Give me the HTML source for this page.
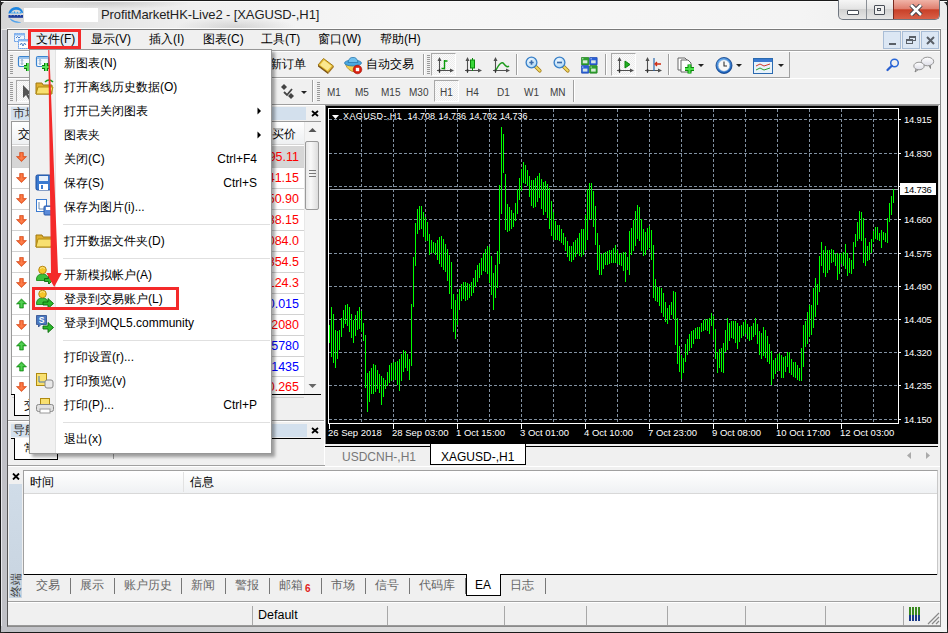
<!DOCTYPE html>
<html><head><meta charset="utf-8">
<style>
*{box-sizing:border-box;margin:0;padding:0}
html,body{width:948px;height:633px;overflow:hidden;background:#2a2a2a;font-family:"Liberation Sans",sans-serif;font-size:12px;color:#000}
.a{position:absolute}
.t{position:absolute;white-space:nowrap;line-height:14px}
.cn{font-size:12px}
.tb{font-size:11px;color:#333}
</style></head><body>
<div class="a" style="left:0;top:0;width:948px;height:633px;border:1px solid #1a1a1a;border-radius:8px 8px 7px 7px;background:linear-gradient(#f0f0f0,#e9e9e9 30px,#e3e3e3)"></div>
<div class="a" style="left:1px;top:30px;width:6px;height:600px;background:#c0c1c6;border-left:1px solid #e8e8ec"></div>
<div class="a" style="left:941px;top:30px;width:6px;height:600px;background:#f4f4f4"></div>
<div class="a" style="left:1px;top:626px;width:946px;height:6px;background:linear-gradient(90deg,#c0c1c6,#e0e0e0 50%,#f4f4f4)"></div>
<div class="a" style="left:1px;top:1px;width:946px;height:28px;border-radius:7px 7px 0 0;background:radial-gradient(60px 10px at 235px 26px,rgba(160,160,160,.35),transparent),radial-gradient(80px 6px at 110px 2px,rgba(150,150,150,.3),transparent),linear-gradient(90deg,#d6d6d6,#e4e4e4 80px,#f0f0f0 200px,#f6f6f6 400px,#f4f4f4 800px,#ececec)"></div>
<div class="a" style="left:1px;top:1px;width:946px;height:1px;background:#fafafa"></div>
<svg class="a" style="left:7px;top:6px" width="18" height="18" viewBox="0 0 18 18">
<path d="M1.3 7.6Q3 1 9 1Q14.5 1 16.2 6.5L15 7.2Q13 3.5 9 3.8Q5 4 3.5 7.6z" fill="#1e86e0"/>
<path d="M4 7.5L5 5.5L6 7.5L7.5 5L9 7.5L10.5 5.5L12 7.5L13.5 5.5L15 7.2" fill="#3aa0ee"/>
<rect x="1.5" y="9" width="14.5" height="2.8" fill="#1c3c9c"/>
<path d="M3.5 9.6h1M6.8 9.6h1M10 9.6h1M13 9.6h1" stroke="#9ab0e0" stroke-width=".8"/>
<path d="M3 12.8Q6 17.3 13.5 16.5Q8 16.2 3 12.8z" fill="#2a8ae0" stroke="#5aaaf0" stroke-width=".6"/>
</svg>
<div class="a" style="left:24px;top:8px;width:74px;height:14px;background:#fff"></div>
<div class="t" style="left:101px;top:6px;font-size:13px;line-height:17px;color:#1e1e1e;letter-spacing:-0.1px">ProfitMarketHK-Live2 - [XAGUSD-,H1]</div>
<!-- caption buttons -->
<div class="a" style="left:838px;top:0;width:102px;height:20px;border:1px solid #6f7680;border-top:none;border-radius:0 0 5px 5px;overflow:hidden;background:linear-gradient(#f6f6f6,#e4e4e4 45%,#d2d2d2 50%,#e6e6e6)">
 <div class="a" style="left:27px;top:0;width:1px;height:20px;background:#8a8f96"></div>
 <div class="a" style="left:54px;top:-1px;width:48px;height:21px;border:1px solid #7a2a20;border-radius:0 0 5px 0;background:linear-gradient(#f0b4a8,#e08070 45%,#c84028 52%,#d86048)"></div>
 <div class="a" style="left:8px;top:10px;width:12px;height:5px;border:1.5px solid #4a4f58;border-radius:1px;background:#fff"></div>
 <div class="a" style="left:35px;top:5px;width:11px;height:10px;border:1.5px solid #4a4f58;border-radius:1px;background:#f0f0f0"><div class="a" style="left:2px;top:2px;width:4px;height:3px;border:1px solid #4a4f58"></div></div>
 <svg class="a" style="left:70px;top:4px" width="14" height="12" viewBox="0 0 14 12"><path d="M2 1L12 11M12 1L2 11" stroke="#3b3f47" stroke-width="4.5"/><path d="M2 1L12 11M12 1L2 11" stroke="#fff" stroke-width="2.5"/></svg>
</div>
<div class="a" style="left:7px;top:28px;width:934px;height:1px;background:#fdfdfd"></div>
<div class="a" style="left:7px;top:29px;width:934px;height:598px;background:#f0f0f0;border-top:1px solid #7a7a7a;border-left:1px solid #555;border-right:1px solid #8a8a8a;border-bottom:1px solid #8a8a8a"></div>
<svg class="a" style="left:13px;top:32px" width="16" height="17" viewBox="0 0 16 17">
<rect x="1.5" y="1.5" width="10" height="8" fill="#eef5fd" stroke="#3a80e0" stroke-dasharray="1.2 .8"/>
<rect x="1.5" y="1.5" width="10" height="2" fill="#8ab8f0"/>
<rect x="5.5" y="7.5" width="10" height="9" fill="#fff" stroke="#3a80e0" stroke-dasharray="1.2 .8"/>
<rect x="5.5" y="7.5" width="10" height="2" fill="#8ab8f0"/>
<path d="M3 6l1.5-1.5 1.5 1.5 1.5-1.5M7 13l1.5-2 1.5 3 1.5-3 1.5 2" stroke="#3a70c0" fill="none" stroke-width=".9"/>
</svg>
<div class="a" style="left:31px;top:32px;width:47px;height:14px;background:#e6edf4"></div>
<div class="t cn" style="left:36px;top:31px;line-height:16px">文件(F)</div>
<div class="t cn" style="left:91px;top:31px;line-height:16px">显示(V)</div>
<div class="t cn" style="left:149px;top:31px;line-height:16px">插入(I)</div>
<div class="t cn" style="left:203px;top:31px;line-height:16px">图表(C)</div>
<div class="t cn" style="left:261px;top:31px;line-height:16px">工具(T)</div>
<div class="t cn" style="left:318px;top:31px;line-height:16px">窗口(W)</div>
<div class="t cn" style="left:380px;top:31px;line-height:16px">帮助(H)</div>
<!-- mdi buttons -->
<div class="a" style="left:883px;top:31px;width:18px;height:18px;background:#dce7f4;border:1px solid #a9bdd6"><div class="a" style="left:5px;top:11px;width:7px;height:2px;background:#5a6068"></div></div>
<div class="a" style="left:902px;top:31px;width:18px;height:18px;background:#dce7f4;border:1px solid #a9bdd6"><div class="a" style="left:6px;top:4px;width:7px;height:5px;border:1px solid #5a6068;border-top-width:2px"></div><div class="a" style="left:3px;top:7px;width:7px;height:5px;border:1px solid #5a6068;border-top-width:2px;background:#dce7f4"></div></div>
<div class="a" style="left:921px;top:31px;width:18px;height:18px;background:#dce7f4;border:1px solid #a9bdd6"><svg class="a" style="left:4px;top:4px" width="9" height="9"><path d="M1 1L8 8M8 1L1 8" stroke="#5a6068" stroke-width="2"/></svg></div>
<div class="a" style="left:8px;top:50px;width:932px;height:1px;background:#a0a0a0"></div><div class="a" style="left:8px;top:51px;width:932px;height:1px;background:#fff"></div><div class="a" style="left:8px;top:77px;width:781px;height:1px;background:#a0a0a0"></div><div class="a" style="left:8px;top:78px;width:932px;height:1px;background:#fff"></div><div class="a" style="left:789px;top:52px;width:1px;height:26px;background:#a0a0a0"></div><div class="a" style="left:8px;top:104px;width:932px;height:1px;background:#a0a0a0"></div><div class="a" style="left:8px;top:105px;width:932px;height:1px;background:#fff"></div><div class="a" style="left:10px;top:55px;width:3px;height:1px;background:#9a9a9a"></div><div class="a" style="left:10px;top:57px;width:3px;height:1px;background:#9a9a9a"></div><div class="a" style="left:10px;top:59px;width:3px;height:1px;background:#9a9a9a"></div><div class="a" style="left:10px;top:61px;width:3px;height:1px;background:#9a9a9a"></div><div class="a" style="left:10px;top:63px;width:3px;height:1px;background:#9a9a9a"></div><div class="a" style="left:10px;top:65px;width:3px;height:1px;background:#9a9a9a"></div><div class="a" style="left:10px;top:67px;width:3px;height:1px;background:#9a9a9a"></div><div class="a" style="left:10px;top:69px;width:3px;height:1px;background:#9a9a9a"></div><div class="a" style="left:10px;top:71px;width:3px;height:1px;background:#9a9a9a"></div><div class="a" style="left:10px;top:73px;width:3px;height:1px;background:#9a9a9a"></div><div class="a" style="left:10px;top:82px;width:3px;height:1px;background:#9a9a9a"></div><div class="a" style="left:10px;top:84px;width:3px;height:1px;background:#9a9a9a"></div><div class="a" style="left:10px;top:86px;width:3px;height:1px;background:#9a9a9a"></div><div class="a" style="left:10px;top:88px;width:3px;height:1px;background:#9a9a9a"></div><div class="a" style="left:10px;top:90px;width:3px;height:1px;background:#9a9a9a"></div><div class="a" style="left:10px;top:92px;width:3px;height:1px;background:#9a9a9a"></div><div class="a" style="left:10px;top:94px;width:3px;height:1px;background:#9a9a9a"></div><div class="a" style="left:10px;top:96px;width:3px;height:1px;background:#9a9a9a"></div><div class="a" style="left:10px;top:98px;width:3px;height:1px;background:#9a9a9a"></div><div class="a" style="left:10px;top:100px;width:3px;height:1px;background:#9a9a9a"></div><svg class="a" style="left:17px;top:53px" width="20" height="20" viewBox="0 0 20 20"><rect x="1.5" y="3.5" width="12" height="10" rx="1.5" fill="#f4f8fd" stroke="#3a84d0" stroke-width="1.2"/><rect x="2" y="4" width="11" height="2" fill="#9cc4ec"/><path d="M5 6.5v5M4 7.5l1-1 1 1M4 10.5l1 1 1-1" stroke="#6a8ab0" stroke-width=".8" fill="none"/><path d="M7 14h8M11 10v8" stroke="#0a7a0a" stroke-width="4"/><path d="M7 14h8M11 10v8" stroke="#5ae05a" stroke-width="2"/></svg><div class="a" style="left:16px;top:80px;width:22px;height:22px;border:1px solid #a8a8a8;border-right-color:#fff;border-bottom-color:#fff;background:repeating-conic-gradient(#fbfbfb 0 25%,#ececec 0 50%) 0 0/2px 2px"></div><svg class="a" style="left:21px;top:84px" width="14" height="16" viewBox="0 0 14 16"><path d="M2 1v13l3-3 3 5 2-1-3-5h4z" fill="#555"/></svg><div class="t cn" style="left:270px;top:56px;line-height:16px">新订单</div><svg class="a" style="left:317px;top:57px" width="18" height="18" viewBox="0 0 18 18"><path d="M1 8L6.5 1.5L16.5 9L11 15.5z" fill="#e8c038" stroke="#9a7010" stroke-width=".9"/><path d="M3 8L7 3.3L14.5 9L10.5 13.6z" fill="#fbe890"/><path d="M1 8L11 15.5L11 17L1 9.6z" fill="#7a5010"/><path d="M11 15.5L16.5 9L16.5 10.5L11 17z" fill="#a87828"/></svg><svg class="a" style="left:343px;top:56px" width="20" height="19" viewBox="0 0 20 19"><path d="M2.5 8.5Q5 15 12 16L15 10z" fill="#f2d050" stroke="#b08820" stroke-width=".8"/><ellipse cx="10" cy="7" rx="8.5" ry="3" fill="#4aa8e0" stroke="#2a78b0" stroke-width=".8"/><path d="M5 6.5Q6 1 10 1.5Q14 1 15 6.5z" fill="#70c0ee" stroke="#2a78b0" stroke-width=".8"/><circle cx="14.5" cy="13.5" r="4.3" fill="#d82010" stroke="#a01008" stroke-width=".6"/><rect x="12.8" y="11.8" width="3.4" height="3.4" fill="#fff"/></svg><div class="t cn" style="left:366px;top:56px;line-height:16px">自动交易</div><div class="a" style="left:423px;top:54px;width:1px;height:21px;background:#a0a0a0;box-shadow:1px 0 0 #fff"></div><div class="a" style="left:427px;top:55px;width:3px;height:1px;background:#9a9a9a"></div><div class="a" style="left:427px;top:57px;width:3px;height:1px;background:#9a9a9a"></div><div class="a" style="left:427px;top:59px;width:3px;height:1px;background:#9a9a9a"></div><div class="a" style="left:427px;top:61px;width:3px;height:1px;background:#9a9a9a"></div><div class="a" style="left:427px;top:63px;width:3px;height:1px;background:#9a9a9a"></div><div class="a" style="left:427px;top:65px;width:3px;height:1px;background:#9a9a9a"></div><div class="a" style="left:427px;top:67px;width:3px;height:1px;background:#9a9a9a"></div><div class="a" style="left:427px;top:69px;width:3px;height:1px;background:#9a9a9a"></div><div class="a" style="left:427px;top:71px;width:3px;height:1px;background:#9a9a9a"></div><div class="a" style="left:427px;top:73px;width:3px;height:1px;background:#9a9a9a"></div><div class="a" style="left:431px;top:53px;width:25px;height:23px;border:1px solid #a8a8a8;border-right-color:#fff;border-bottom-color:#fff;background:repeating-conic-gradient(#fbfbfb 0 25%,#ececec 0 50%) 0 0/2px 2px"></div><svg class="a" style="left:436px;top:56px" width="20" height="19"><path d="M3.5 3v14M1 14.5h14" stroke="#505050" stroke-width="1.1" fill="none"/><path d="M1.5 5L3.5 1L5.5 5z" fill="#505050"/><path d="M14 12.5L18 14.5L14 16.5z" fill="#505050"/><path d="M3.5 13v3" stroke="#303030" stroke-width="1.5"/><path d="M8.5 4v9.5M8.5 5h3M5.5 12.5h3" stroke="#0a9a0a" stroke-width="1.4" fill="none"/></svg><svg class="a" style="left:464px;top:56px" width="20" height="19"><path d="M3.5 3v14M1 14.5h14" stroke="#505050" stroke-width="1.1" fill="none"/><path d="M1.5 5L3.5 1L5.5 5z" fill="#505050"/><path d="M14 12.5L18 14.5L14 16.5z" fill="#505050"/><path d="M3.5 13v3" stroke="#303030" stroke-width="1.5"/><path d="M8.5 2v13" stroke="#0a8a0a"/><rect x="6.5" y="4" width="4" height="8" fill="#3ad83a" stroke="#0a8a0a"/></svg><svg class="a" style="left:492px;top:56px" width="20" height="19"><path d="M3.5 3v14M1 14.5h14" stroke="#505050" stroke-width="1.1" fill="none"/><path d="M1.5 5L3.5 1L5.5 5z" fill="#505050"/><path d="M14 12.5L18 14.5L14 16.5z" fill="#505050"/><path d="M3.5 13v3" stroke="#303030" stroke-width="1.5"/><path d="M4 14q5-10 8-6t5 2" stroke="#1a9a1a" stroke-width="1.4" fill="none"/></svg><div class="a" style="left:516px;top:54px;width:1px;height:21px;background:#a0a0a0;box-shadow:1px 0 0 #fff"></div><svg class="a" style="left:523px;top:55px" width="21" height="20" viewBox="0 0 21 20"><defs><radialGradient id="lg523" cx=".4" cy=".35" r=".7"><stop offset="0" stop-color="#f4faff"/><stop offset="1" stop-color="#a8d4f4"/></radialGradient></defs><path d="M12.3 11.3L16.8 15.8" stroke="#a07818" stroke-width="3.6" stroke-linecap="round"/><path d="M12.3 11.3L16.8 15.8" stroke="#f0d860" stroke-width="2" stroke-linecap="round"/><circle cx="8.5" cy="7.5" r="5.4" fill="url(#lg523)" stroke="#3a80c8" stroke-width="1.3"/><path d="M6.3 7.5h4.4M8.5 5.3v4.4" stroke="#3a6aa8" stroke-width="1.7"/></svg><svg class="a" style="left:551px;top:55px" width="21" height="20" viewBox="0 0 21 20"><defs><radialGradient id="lg551" cx=".4" cy=".35" r=".7"><stop offset="0" stop-color="#f4faff"/><stop offset="1" stop-color="#a8d4f4"/></radialGradient></defs><path d="M12.3 11.3L16.8 15.8" stroke="#a07818" stroke-width="3.6" stroke-linecap="round"/><path d="M12.3 11.3L16.8 15.8" stroke="#f0d860" stroke-width="2" stroke-linecap="round"/><circle cx="8.5" cy="7.5" r="5.4" fill="url(#lg551)" stroke="#3a80c8" stroke-width="1.3"/><path d="M6 7.5h5" stroke="#3a6aa8" stroke-width="1.7"/></svg><svg class="a" style="left:581px;top:57px" width="17" height="17" viewBox="0 0 17 17"><rect x="0.3" y="0.3" width="7.6" height="7.6" rx=".6" fill="#30a030" stroke="#1a7a1a" stroke-width=".6"/><rect x="1.8" y="3.3" width="4.6" height="3" fill="#e8f4e8" opacity=".9"/><rect x="1.3" y="1.3" width="1" height="1" fill="#fff"/><rect x="8.6" y="0.3" width="7.6" height="7.6" rx=".6" fill="#2a60d8" stroke="#1a40a0" stroke-width=".6"/><rect x="10.1" y="3.3" width="4.6" height="3" fill="#e8f4e8" opacity=".9"/><rect x="9.6" y="1.3" width="1" height="1" fill="#fff"/><rect x="0.3" y="8.6" width="7.6" height="7.6" rx=".6" fill="#2a60d8" stroke="#1a40a0" stroke-width=".6"/><rect x="1.8" y="11.6" width="4.6" height="3" fill="#e8f4e8" opacity=".9"/><rect x="1.3" y="9.6" width="1" height="1" fill="#fff"/><rect x="8.6" y="8.6" width="7.6" height="7.6" rx=".6" fill="#30a030" stroke="#1a7a1a" stroke-width=".6"/><rect x="10.1" y="11.6" width="4.6" height="3" fill="#e8f4e8" opacity=".9"/><rect x="9.6" y="9.6" width="1" height="1" fill="#fff"/></svg><div class="a" style="left:605px;top:54px;width:1px;height:21px;background:#a0a0a0;box-shadow:1px 0 0 #fff"></div><div class="a" style="left:611px;top:53px;width:25px;height:23px;border:1px solid #a8a8a8;border-right-color:#fff;border-bottom-color:#fff;background:repeating-conic-gradient(#fbfbfb 0 25%,#ececec 0 50%) 0 0/2px 2px"></div><svg class="a" style="left:616px;top:56px" width="20" height="19"><path d="M3.5 3v14M1 14.5h14" stroke="#505050" stroke-width="1.1" fill="none"/><path d="M1.5 5L3.5 1L5.5 5z" fill="#505050"/><path d="M14 12.5L18 14.5L14 16.5z" fill="#505050"/><path d="M3.5 13v3" stroke="#303030" stroke-width="1.5"/><path d="M9 5v7l5-3.5z" fill="#20b020" stroke="#0a800a"/></svg><svg class="a" style="left:644px;top:56px" width="20" height="19"><path d="M3.5 3v14M1 14.5h14" stroke="#505050" stroke-width="1.1" fill="none"/><path d="M1.5 5L3.5 1L5.5 5z" fill="#505050"/><path d="M14 12.5L18 14.5L14 16.5z" fill="#505050"/><path d="M3.5 13v3" stroke="#303030" stroke-width="1.5"/><path d="M10 2v13" stroke="#2a6ab0" stroke-width="1.2"/><path d="M17 8h-5M13 6l-2 2 2 2" stroke="#d02a10" stroke-width="1.3" fill="none"/></svg><div class="a" style="left:668px;top:54px;width:1px;height:21px;background:#a0a0a0;box-shadow:1px 0 0 #fff"></div><svg class="a" style="left:676px;top:56px" width="32" height="20" viewBox="0 0 32 20"><path d="M2 2h7l3 3v9H2z" fill="#fff" stroke="#666"/><path d="M5 4h7l3 3v9H5z" fill="#fff" stroke="#666"/><path d="M9 13h9M13.5 8.5v9" stroke="#0a8a0a" stroke-width="4"/><path d="M9 13h9M13.5 8.5v9" stroke="#4ae04a" stroke-width="2"/><path d="M22 8h6l-3 3z" fill="#222"/></svg><svg class="a" style="left:715px;top:56px" width="28" height="20" viewBox="0 0 28 20"><defs><radialGradient id="cg" cx=".4" cy=".3" r=".8"><stop offset="0" stop-color="#7ac0ff"/><stop offset="1" stop-color="#0a50b0"/></radialGradient></defs><circle cx="9" cy="9.5" r="8" fill="url(#cg)" stroke="#0a3a80" stroke-width=".8"/><circle cx="9" cy="9.5" r="5.8" fill="#f8f8f8" stroke="#8ab0d8" stroke-width=".6"/><path d="M9 5.5v4.5h3" stroke="#333" stroke-width="1.1" fill="none"/><path d="M21 8h6l-3 3z" fill="#222"/></svg><svg class="a" style="left:752px;top:56px" width="36" height="20" viewBox="0 0 36 20"><rect x="1.5" y="2.5" width="19" height="15" fill="#e8f2fa" stroke="#2a6ab0"/><rect x="2" y="3" width="18" height="3" fill="#3a7ad0"/><path d="M4 10l4-2 4 2 6-2" stroke="#d03a2a" fill="none"/><path d="M4 14l4-2 4 2 6-2" stroke="#2aa02a" fill="none"/><path d="M26 8h6l-3 3z" fill="#222"/></svg><svg class="a" style="left:884px;top:55px" width="18" height="18" viewBox="0 0 18 18"><circle cx="10.5" cy="8" r="3.8" fill="none" stroke="#2a68d8" stroke-width="1.5"/><path d="M7.8 10.7L3.5 15" stroke="#2a60d0" stroke-width="2.3" stroke-linecap="round"/></svg><svg class="a" style="left:910px;top:55px" width="28" height="22" viewBox="0 0 28 22"><defs><linearGradient id="bg1" x1="0" y1="0" x2="0" y2="1"><stop offset="0" stop-color="#fff"/><stop offset="1" stop-color="#dcdce6"/></linearGradient></defs><path d="M19 10.5l1.5 3 0-3.2" fill="#ccc" stroke="#777" stroke-width=".8"/><ellipse cx="17.5" cy="6.5" rx="6.2" ry="4.3" fill="url(#bg1)" stroke="#8a8a8a" stroke-width=".9"/><path d="M6 14l-1 3 3.5-2.5" fill="#ccc" stroke="#777" stroke-width=".8"/><ellipse cx="9" cy="11" rx="5.2" ry="3.8" fill="url(#bg1)" stroke="#8a8a8a" stroke-width=".9"/></svg><svg class="a" style="left:280px;top:83px" width="28" height="17" viewBox="0 0 28 17"><path d="M4 1L7 4L4 7L1 4z" fill="#444"/><path d="M4 9L7 12L12 6" stroke="#444" stroke-width="1.8" fill="none"/><path d="M11 10L14 13L11 16L8 13z" fill="#444"/><path d="M21 8h6l-3 3z" fill="#222"/></svg><div class="a" style="left:312px;top:80px;width:1px;height:22px;background:#a0a0a0;box-shadow:1px 0 0 #fff"></div><div class="a" style="left:317px;top:82px;width:3px;height:1px;background:#9a9a9a"></div><div class="a" style="left:317px;top:84px;width:3px;height:1px;background:#9a9a9a"></div><div class="a" style="left:317px;top:86px;width:3px;height:1px;background:#9a9a9a"></div><div class="a" style="left:317px;top:88px;width:3px;height:1px;background:#9a9a9a"></div><div class="a" style="left:317px;top:90px;width:3px;height:1px;background:#9a9a9a"></div><div class="a" style="left:317px;top:92px;width:3px;height:1px;background:#9a9a9a"></div><div class="a" style="left:317px;top:94px;width:3px;height:1px;background:#9a9a9a"></div><div class="a" style="left:317px;top:96px;width:3px;height:1px;background:#9a9a9a"></div><div class="a" style="left:317px;top:98px;width:3px;height:1px;background:#9a9a9a"></div><div class="a" style="left:317px;top:100px;width:3px;height:1px;background:#9a9a9a"></div><div class="a" style="left:434px;top:80px;width:25px;height:22px;border:1px solid #a8a8a8;border-right-color:#fff;border-bottom-color:#fff;background:repeating-conic-gradient(#fbfbfb 0 25%,#ececec 0 50%) 0 0/2px 2px"></div><div class="t tb" style="left:327px;top:86px;font-size:10px;line-height:13px;color:#404040">M1</div><div class="t tb" style="left:355px;top:86px;font-size:10px;line-height:13px;color:#404040">M5</div><div class="t tb" style="left:381px;top:86px;font-size:10px;line-height:13px;color:#404040">M15</div><div class="t tb" style="left:409px;top:86px;font-size:10px;line-height:13px;color:#404040">M30</div><div class="t tb" style="left:440px;top:86px;font-size:10px;line-height:13px;color:#404040">H1</div><div class="t tb" style="left:466px;top:86px;font-size:10px;line-height:13px;color:#404040">H4</div><div class="t tb" style="left:497px;top:86px;font-size:10px;line-height:13px;color:#404040">D1</div><div class="t tb" style="left:524px;top:86px;font-size:10px;line-height:13px;color:#404040">W1</div><div class="t tb" style="left:550px;top:86px;font-size:10px;line-height:13px;color:#404040">MN</div><div class="a" style="left:573px;top:80px;width:1px;height:22px;background:#a0a0a0;box-shadow:1px 0 0 #fff"></div><div class="a" style="left:8px;top:106px;width:317px;height:360px;background:#f0f0f0"></div><div class="a" style="left:11px;top:107px;width:295px;height:13px;background:#d3e0ed"></div><div class="t cn" style="left:13px;top:105px;line-height:16px;color:#333">市场报价: 12:00:00</div><svg class="a" style="left:311px;top:110px" width="8" height="7"><path d="M1 1L7 6M7 1L1 6" stroke="#000" stroke-width="1.8"/></svg><div class="a" style="left:11px;top:121px;width:310px;height:273px;background:#fff;border:1px solid #999;border-bottom:none"></div><div class="a" style="left:12px;top:122px;width:292px;height:23px;background:linear-gradient(#fff,#f6f7f8 50%,#eef0f2);border-bottom:1px solid #d5d5d5"></div><div class="t cn" style="left:18px;top:126px;line-height:16px">交易品种</div><div class="t cn" style="left:272px;top:126px;line-height:16px">买价</div><div class="a" style="left:12px;top:146.0px;width:292px;height:21px;background:#d6d6d6"></div><div class="a" style="left:12px;top:166.9px;width:292px;height:1px;background:#d2d2d2"></div><div class="t" style="right:649px;top:150.0px;font-size:12.5px;line-height:15px;color:#f00">95.11</div><svg class="a" style="left:16px;top:152.0px" width="11" height="10.5" viewBox="0 0 12 11.5"><path d="M4 0.5h4v4.5h3.5L6 10.5 0.5 5H4z" fill="#f4622a" stroke="#d24010" stroke-width=".7"/><path d="M5 1.5h2v4.5h2.2L6 9 2.8 6H5z" fill="#ff9060" opacity=".6"/></svg><div class="a" style="left:12px;top:187.9px;width:292px;height:1px;background:#d2d2d2"></div><div class="t" style="right:649px;top:170.9px;font-size:12.5px;line-height:15px;color:#f00">41.15</div><svg class="a" style="left:16px;top:172.9px" width="11" height="10.5" viewBox="0 0 12 11.5"><path d="M4 0.5h4v4.5h3.5L6 10.5 0.5 5H4z" fill="#f4622a" stroke="#d24010" stroke-width=".7"/><path d="M5 1.5h2v4.5h2.2L6 9 2.8 6H5z" fill="#ff9060" opacity=".6"/></svg><div class="a" style="left:12px;top:208.8px;width:292px;height:1px;background:#d2d2d2"></div><div class="t" style="right:649px;top:191.9px;font-size:12.5px;line-height:15px;color:#f00">50.90</div><svg class="a" style="left:16px;top:193.9px" width="11" height="10.5" viewBox="0 0 12 11.5"><path d="M4 0.5h4v4.5h3.5L6 10.5 0.5 5H4z" fill="#f4622a" stroke="#d24010" stroke-width=".7"/><path d="M5 1.5h2v4.5h2.2L6 9 2.8 6H5z" fill="#ff9060" opacity=".6"/></svg><div class="a" style="left:12px;top:229.8px;width:292px;height:1px;background:#d2d2d2"></div><div class="t" style="right:649px;top:212.8px;font-size:12.5px;line-height:15px;color:#f00">38.15</div><svg class="a" style="left:16px;top:214.8px" width="11" height="10.5" viewBox="0 0 12 11.5"><path d="M4 0.5h4v4.5h3.5L6 10.5 0.5 5H4z" fill="#f4622a" stroke="#d24010" stroke-width=".7"/><path d="M5 1.5h2v4.5h2.2L6 9 2.8 6H5z" fill="#ff9060" opacity=".6"/></svg><div class="a" style="left:12px;top:250.8px;width:292px;height:1px;background:#d2d2d2"></div><div class="t" style="right:649px;top:233.8px;font-size:12.5px;line-height:15px;color:#f00">084.0</div><svg class="a" style="left:16px;top:235.8px" width="11" height="10.5" viewBox="0 0 12 11.5"><path d="M4 0.5h4v4.5h3.5L6 10.5 0.5 5H4z" fill="#f4622a" stroke="#d24010" stroke-width=".7"/><path d="M5 1.5h2v4.5h2.2L6 9 2.8 6H5z" fill="#ff9060" opacity=".6"/></svg><div class="a" style="left:12px;top:271.7px;width:292px;height:1px;background:#d2d2d2"></div><div class="t" style="right:649px;top:254.8px;font-size:12.5px;line-height:15px;color:#f00">354.5</div><svg class="a" style="left:16px;top:256.8px" width="11" height="10.5" viewBox="0 0 12 11.5"><path d="M4 0.5h4v4.5h3.5L6 10.5 0.5 5H4z" fill="#f4622a" stroke="#d24010" stroke-width=".7"/><path d="M5 1.5h2v4.5h2.2L6 9 2.8 6H5z" fill="#ff9060" opacity=".6"/></svg><div class="a" style="left:12px;top:292.6px;width:292px;height:1px;background:#d2d2d2"></div><div class="t" style="right:649px;top:275.7px;font-size:12.5px;line-height:15px;color:#f00">124.3</div><svg class="a" style="left:16px;top:277.7px" width="11" height="10.5" viewBox="0 0 12 11.5"><path d="M4 0.5h4v4.5h3.5L6 10.5 0.5 5H4z" fill="#f4622a" stroke="#d24010" stroke-width=".7"/><path d="M5 1.5h2v4.5h2.2L6 9 2.8 6H5z" fill="#ff9060" opacity=".6"/></svg><div class="a" style="left:12px;top:313.6px;width:292px;height:1px;background:#d2d2d2"></div><div class="t" style="right:649px;top:296.6px;font-size:12.5px;line-height:15px;color:#00f">0.015</div><svg class="a" style="left:16px;top:298.1px" width="11" height="10.5" viewBox="0 0 12 11.5"><path d="M4 11h4V6.5h3.5L6 1 0.5 6.5H4z" fill="#28b428" stroke="#108010" stroke-width=".7"/><path d="M5 10h2V5.5h2.2L6 2.5 2.8 5.5H5z" fill="#70e070" opacity=".6"/></svg><div class="a" style="left:12px;top:334.6px;width:292px;height:1px;background:#d2d2d2"></div><div class="t" style="right:649px;top:317.6px;font-size:12.5px;line-height:15px;color:#f00">2080</div><svg class="a" style="left:16px;top:319.6px" width="11" height="10.5" viewBox="0 0 12 11.5"><path d="M4 0.5h4v4.5h3.5L6 10.5 0.5 5H4z" fill="#f4622a" stroke="#d24010" stroke-width=".7"/><path d="M5 1.5h2v4.5h2.2L6 9 2.8 6H5z" fill="#ff9060" opacity=".6"/></svg><div class="a" style="left:12px;top:355.5px;width:292px;height:1px;background:#d2d2d2"></div><div class="t" style="right:649px;top:338.5px;font-size:12.5px;line-height:15px;color:#00f">5780</div><svg class="a" style="left:16px;top:340.0px" width="11" height="10.5" viewBox="0 0 12 11.5"><path d="M4 11h4V6.5h3.5L6 1 0.5 6.5H4z" fill="#28b428" stroke="#108010" stroke-width=".7"/><path d="M5 10h2V5.5h2.2L6 2.5 2.8 5.5H5z" fill="#70e070" opacity=".6"/></svg><div class="a" style="left:12px;top:376.4px;width:292px;height:1px;background:#d2d2d2"></div><div class="t" style="right:649px;top:359.5px;font-size:12.5px;line-height:15px;color:#00f">1435</div><svg class="a" style="left:16px;top:361.0px" width="11" height="10.5" viewBox="0 0 12 11.5"><path d="M4 11h4V6.5h3.5L6 1 0.5 6.5H4z" fill="#28b428" stroke="#108010" stroke-width=".7"/><path d="M5 10h2V5.5h2.2L6 2.5 2.8 5.5H5z" fill="#70e070" opacity=".6"/></svg><div class="a" style="left:12px;top:397.4px;width:292px;height:1px;background:#d2d2d2"></div><div class="t" style="right:649px;top:380.4px;font-size:12.5px;line-height:15px;color:#f00">0.265</div><svg class="a" style="left:16px;top:382.4px" width="11" height="10.5" viewBox="0 0 12 11.5"><path d="M4 0.5h4v4.5h3.5L6 10.5 0.5 5H4z" fill="#f4622a" stroke="#d24010" stroke-width=".7"/><path d="M5 1.5h2v4.5h2.2L6 9 2.8 6H5z" fill="#ff9060" opacity=".6"/></svg><div class="a" style="left:304px;top:122px;width:17px;height:272px;background:#f4f4f4;border-left:1px solid #e8e8e8"></div><svg class="a" style="left:308px;top:127px" width="9" height="6"><path d="M0.5 5L4.5 1 8.5 5z" fill="#555"/></svg><svg class="a" style="left:308px;top:383px" width="9" height="6"><path d="M0.5 1L4.5 5 8.5 1z" fill="#666"/></svg><div class="a" style="left:305px;top:141px;width:14px;height:69px;border:1px solid #9a9a9a;border-radius:2px;background:linear-gradient(90deg,#e8e8e8,#f8f8f8 40%,#dcdcdc)"></div><div class="a" style="left:309px;top:170px;width:7px;height:7px;border-top:1px solid #777;border-bottom:1px solid #777"><div class="a" style="left:0;top:2px;width:7px;height:1px;background:#777"></div></div><div class="a" style="left:11px;top:394px;width:310px;height:1px;background:#000"></div><div class="a" style="left:14px;top:394px;width:44px;height:22px;background:#fff;border:1px solid #000;border-top:none"></div><div class="t cn" style="left:24px;top:397px;line-height:16px">交易品种</div><div class="a" style="left:8px;top:420px;width:317px;height:1px;background:#a0a0a0"></div><div class="a" style="left:8px;top:421px;width:317px;height:1px;background:#fff"></div><div class="a" style="left:11px;top:424px;width:296px;height:13px;background:#d3e0ed"></div><div class="t cn" style="left:13px;top:422px;line-height:16px;color:#333">导航</div><svg class="a" style="left:311px;top:427px" width="8" height="7"><path d="M1 1L7 6M7 1L1 6" stroke="#000" stroke-width="1.8"/></svg><div class="a" style="left:11px;top:438px;width:310px;height:1px;background:#000"></div><div class="a" style="left:14px;top:438px;width:44px;height:22px;background:#fff;border:1px solid #000;border-top:none"></div><div class="t cn" style="left:24px;top:440px;line-height:16px">常用</div><div class="a" style="left:113px;top:444px;width:1px;height:15px;background:#999"></div><div class="a" style="left:324px;top:106px;width:1px;height:359px;background:#fff"></div><div class="a" style="left:325px;top:105px;width:614px;height:339px;background:#000;border-left:1px solid #888;border-top:1px solid #888;border-right:1px solid #d8d8d8"></div><svg class="a" style="left:0;top:0" width="948" height="633">
<path d="M361.5 109V423M393.5 109V423M425.5 109V423M457.5 109V423M489.5 109V423M521.5 109V423M553.5 109V423M585.5 109V423M617.5 109V423M649.5 109V423M681.5 109V423M713.5 109V423M745.5 109V423M777.5 109V423M809.5 109V423M841.5 109V423M873.5 109V423M329 119.5H898M329 153.5H898M329 186.5H898M329 219.5H898M329 253.5H898M329 286.5H898M329 319.5H898M329 352.5H898M329 385.5H898M329 419.5H898" stroke="#8190a0" stroke-width="1" stroke-dasharray="3 2" fill="none" shape-rendering="crispEdges"/>
<path d="M329.5 189.5H898" stroke="#97a0aa" stroke-width="1" shape-rendering="crispEdges"/>
<path d="M329.5 325V343M331.5 307V357M333.5 314V363M335.5 330V368M337.5 331V359M339.5 330V350M341.5 318V337M343.5 310V328M345.5 305V324M347.5 304V326M349.5 307V332M351.5 314V338M353.5 320V343M355.5 315V336M357.5 311V330M359.5 307V329M361.5 311V332M363.5 323V341M365.5 335V388M367.5 373V412M369.5 371V402M371.5 368V394M373.5 364V394M375.5 365V392M377.5 370V389M379.5 374V393M381.5 376V405M383.5 378V397M385.5 380V389M387.5 372V386M389.5 365V383M391.5 363V381M393.5 362V380M395.5 362V380M397.5 361V385M399.5 359V391M401.5 354V381M403.5 350V372M405.5 351V368M407.5 354V371M409.5 359V380M411.5 304V366M413.5 257V307M415.5 223V266M417.5 209V234M419.5 206V230M421.5 206V229M423.5 212V237M425.5 217V241M427.5 222V241M429.5 234V255M431.5 240V253M433.5 242V253M435.5 243V255M437.5 240V260M439.5 237V264M441.5 236V267M443.5 239V270M445.5 244V272M447.5 249V281M449.5 255V294M451.5 262V309M453.5 294V332M455.5 300V339M457.5 294V325M459.5 289V310M461.5 284V301M463.5 282V299M465.5 282V301M467.5 283V300M469.5 284V298M471.5 282V296M473.5 278V293M475.5 270V287M477.5 265V282M479.5 263V278M481.5 258V275M483.5 253V271M485.5 249V272M487.5 246V274M489.5 247V283M491.5 256V295M493.5 273V310M495.5 265V298M497.5 251V288M499.5 185V264M501.5 127V214M503.5 134V173M505.5 174V230M507.5 204V232M509.5 207V231M511.5 210V229M513.5 213V227M515.5 203V221M517.5 189V214M519.5 178V200M521.5 169V191M523.5 162V183M525.5 165V184M527.5 170V186M529.5 176V197M531.5 180V206M533.5 180V208M535.5 178V207M537.5 176V202M539.5 173V198M541.5 179V209M543.5 182V215M545.5 181V212M547.5 184V218M549.5 188V229M551.5 201V236M553.5 212V240M555.5 221V240M557.5 225V240M559.5 225V241M561.5 229V243M563.5 233V245M565.5 237V251M567.5 241V257M569.5 246V261M571.5 246V262M573.5 242V260M575.5 240V257M577.5 238V254M579.5 233V256M581.5 229V257M583.5 229V255M585.5 215V250M587.5 189V240M589.5 183V220M591.5 183V219M593.5 191V227M595.5 206V245M597.5 233V270M599.5 245V275M601.5 254V275M603.5 253V269M605.5 252V265M607.5 251V265M609.5 250V264M611.5 250V263M613.5 248V263M615.5 245V263M617.5 250V264M619.5 254V265M621.5 253V266M623.5 252V271M625.5 252V282M627.5 257V270M629.5 231V275M631.5 228V255M633.5 220V251M635.5 211V246M637.5 205V239M639.5 207V241M641.5 219V251M643.5 229V256M645.5 232V255M647.5 228V250M649.5 226V248M651.5 230V260M653.5 245V298M655.5 279V301M657.5 287V302M659.5 287V306M661.5 288V313M663.5 293V317M665.5 302V322M667.5 308V324M669.5 305V320M671.5 302V315M673.5 291V319M675.5 292V345M677.5 318V364M679.5 346V372M681.5 355V379M683.5 358V373M685.5 344V362M687.5 339V355M689.5 334V351M691.5 331V348M693.5 330V344M695.5 328V339M697.5 327V339M699.5 327V339M701.5 323V332M703.5 320V331M705.5 319V330M707.5 319V331M709.5 318V334M711.5 313V326M713.5 316V340M715.5 329V359M717.5 352V373M719.5 349V368M721.5 348V372M723.5 343V373M725.5 330V352M727.5 318V350M729.5 323V341M731.5 321V338M733.5 321V339M735.5 321V343M737.5 323V349M739.5 326V342M741.5 325V338M743.5 322V336M745.5 320V334M747.5 324V339M749.5 327V341M751.5 326V340M753.5 323V337M755.5 318V335M757.5 324V344M759.5 331V355M761.5 333V359M763.5 327V356M765.5 330V358M767.5 336V362M769.5 344V364M771.5 351V385M773.5 360V379M775.5 358V374M777.5 354V371M779.5 353V371M781.5 355V378M783.5 357V378M785.5 356V372M787.5 352V367M789.5 352V373M791.5 359V375M793.5 362V377M795.5 362V378M797.5 365V380M799.5 368V381M801.5 348V381M803.5 325V367M805.5 321V347M807.5 312V344M809.5 305V337M811.5 305V335M813.5 288V328M815.5 278V317M817.5 284V305M819.5 256V292M821.5 242V266M823.5 250V273M825.5 246V277M827.5 250V273M829.5 250V270M831.5 249V263M833.5 250V262M835.5 254V266M837.5 253V280M839.5 254V274M841.5 253V264M843.5 252V266M845.5 244V269M847.5 253V276M849.5 258V273M851.5 260V274M853.5 242V269M855.5 234V247M857.5 222V241M859.5 211V239M861.5 212V241M863.5 218V263M865.5 238V266M867.5 246V261M869.5 242V260M871.5 239V253M873.5 231V242M875.5 227V239M877.5 227V240M879.5 233V241M881.5 230V248M883.5 232V240M885.5 233V242M887.5 218V243M889.5 203V222M891.5 196V215M893.5 189V203" stroke="#00ff00" stroke-width="1" fill="none" shape-rendering="crispEdges"/>
<rect x="328.5" y="108.5" width="570" height="315" fill="none" stroke="#fff" shape-rendering="crispEdges"/>
</svg><svg class="a" style="left:0;top:0" width="948" height="633"><path d="M329.5 423V429M393.5 423V429M457.5 423V429M521.5 423V429M585.5 423V429M649.5 423V429M713.5 423V429M777.5 423V429M841.5 423V429M898 119.5H901M898 153.5H901M898 186.5H901M898 219.5H901M898 253.5H901M898 286.5H901M898 319.5H901M898 352.5H901M898 385.5H901M898 419.5H901" stroke="#fff" shape-rendering="crispEdges"/><path d="M332 115h7l-3.5 4z" fill="#fff"/></svg><div class="t" style="left:343px;top:110px;font-size:9px;line-height:12px;color:#fff;letter-spacing:.4px">XAGUSD-,H1</div><div class="t" style="left:407.5px;top:110px;font-size:9px;line-height:12px;color:#fff">14.708</div><div class="t" style="left:438.5px;top:110px;font-size:9px;line-height:12px;color:#fff">14.736</div><div class="t" style="left:469.6px;top:110px;font-size:9px;line-height:12px;color:#fff">14.702</div><div class="t" style="left:500.1px;top:110px;font-size:9px;line-height:12px;color:#fff">14.736</div><div class="t" style="left:904px;top:113.5px;font-size:9.5px;letter-spacing:-.25px;line-height:12px;color:#fff">14.915</div><div class="t" style="left:904px;top:147.5px;font-size:9.5px;letter-spacing:-.25px;line-height:12px;color:#fff">14.830</div><div class="t" style="left:904px;top:213.5px;font-size:9.5px;letter-spacing:-.25px;line-height:12px;color:#fff">14.660</div><div class="t" style="left:904px;top:247.5px;font-size:9.5px;letter-spacing:-.25px;line-height:12px;color:#fff">14.575</div><div class="t" style="left:904px;top:280.5px;font-size:9.5px;letter-spacing:-.25px;line-height:12px;color:#fff">14.490</div><div class="t" style="left:904px;top:313.5px;font-size:9.5px;letter-spacing:-.25px;line-height:12px;color:#fff">14.405</div><div class="t" style="left:904px;top:346.5px;font-size:9.5px;letter-spacing:-.25px;line-height:12px;color:#fff">14.320</div><div class="t" style="left:904px;top:379.5px;font-size:9.5px;letter-spacing:-.25px;line-height:12px;color:#fff">14.235</div><div class="t" style="left:904px;top:413.5px;font-size:9.5px;letter-spacing:-.25px;line-height:12px;color:#fff">14.150</div><div class="t" style="left:904px;top:180.5px;font-size:9.5px;letter-spacing:-.25px;line-height:12px;color:#fff">14.745</div><div class="a" style="left:900px;top:183px;width:36px;height:12px;background:#fff"></div><div class="t" style="left:904px;top:183.5px;font-size:9.5px;letter-spacing:-.25px;line-height:12px;color:#000">14.736</div><div class="t" style="left:328px;top:427px;font-size:9.5px;line-height:12px;color:#fff">26 Sep 2018</div><div class="t" style="left:392px;top:427px;font-size:9.5px;line-height:12px;color:#fff">28 Sep 03:00</div><div class="t" style="left:456px;top:427px;font-size:9.5px;line-height:12px;color:#fff">1 Oct 15:00</div><div class="t" style="left:520px;top:427px;font-size:9.5px;line-height:12px;color:#fff">3 Oct 01:00</div><div class="t" style="left:584px;top:427px;font-size:9.5px;line-height:12px;color:#fff">4 Oct 10:00</div><div class="t" style="left:648px;top:427px;font-size:9.5px;line-height:12px;color:#fff">7 Oct 23:00</div><div class="t" style="left:712px;top:427px;font-size:9.5px;line-height:12px;color:#fff">9 Oct 08:00</div><div class="t" style="left:776px;top:427px;font-size:9.5px;line-height:12px;color:#fff">10 Oct 17:00</div><div class="t" style="left:840px;top:427px;font-size:9.5px;line-height:12px;color:#fff">12 Oct 03:00</div><div class="a" style="left:325px;top:445px;width:615px;height:21px;background:#f0f0f0"></div><div class="a" style="left:326px;top:445px;width:104px;height:20px;background:#f0f0f0"></div><div class="t" style="left:342px;top:450px;font-size:12px;line-height:14px;color:#777">USDCNH-,H1</div><div class="a" style="left:325px;top:446px;width:613px;height:1px;background:#000"></div><div class="a" style="left:430px;top:444px;width:96px;height:21px;background:#fff;border:1px solid #000;border-top:none"></div><div class="t" style="left:441px;top:450px;font-size:12px;line-height:14px;color:#000">XAGUSD-,H1</div><svg class="a" style="left:906px;top:451px" width="26" height="9"><path d="M5 1v7L1 4.5z" fill="#aaa"/><path d="M20 1v7l4-3.5z" fill="#aaa"/></svg><div class="a" style="left:8px;top:465px;width:317px;height:1px;background:#a0a0a0"></div><div class="a" style="left:8px;top:466px;width:932px;height:1px;background:#fff"></div><svg class="a" style="left:12px;top:473px" width="8" height="7"><path d="M1 0.5L7 6.5M7 0.5L1 6.5" stroke="#000" stroke-width="1.8"/></svg><div class="a" style="left:9px;top:484px;width:13px;height:114px;background:linear-gradient(#d0dce8,#c8d4e0)"></div><div class="t cn" style="left:3px;top:578px;width:26px;height:14px;font-size:12px;line-height:14px;color:#444;transform:rotate(-90deg);text-align:center">终端</div><div class="a" style="left:23px;top:470px;width:915px;height:105px;background:#fff;border-left:1px solid #a0a0a0;border-top:1px solid #a0a0a0;border-right:1px solid #c8c8c8"></div><div class="a" style="left:24px;top:471px;width:913px;height:23px;background:linear-gradient(#fff,#f7f8f9 50%,#eff1f3);border-bottom:1px solid #d8d8d8"></div><div class="a" style="left:183px;top:472px;width:1px;height:20px;background:#e2e2e2"></div><div class="t cn" style="left:30px;top:474px;line-height:16px">时间</div><div class="t cn" style="left:190px;top:474px;line-height:16px">信息</div><div class="a" style="left:24px;top:574px;width:913px;height:1px;background:#000"></div><div class="t cn" style="left:36px;top:577px;line-height:16px;color:#666">交易</div><div class="t cn" style="left:80px;top:577px;line-height:16px;color:#666">展示</div><div class="t cn" style="left:124px;top:577px;line-height:16px;color:#666">账户历史</div><div class="t cn" style="left:191px;top:577px;line-height:16px;color:#666">新闻</div><div class="t cn" style="left:235px;top:577px;line-height:16px;color:#666">警报</div><div class="t cn" style="left:279px;top:577px;line-height:16px;color:#666">邮箱</div><div class="t cn" style="left:331px;top:577px;line-height:16px;color:#666">市场</div><div class="t cn" style="left:375px;top:577px;line-height:16px;color:#666">信号</div><div class="t cn" style="left:419px;top:577px;line-height:16px;color:#666">代码库</div><div class="t cn" style="left:510px;top:577px;line-height:16px;color:#666">日志</div><div class="a" style="left:70px;top:578px;width:1px;height:16px;background:#777"></div><div class="a" style="left:114px;top:578px;width:1px;height:16px;background:#777"></div><div class="a" style="left:181px;top:578px;width:1px;height:16px;background:#777"></div><div class="a" style="left:225px;top:578px;width:1px;height:16px;background:#777"></div><div class="a" style="left:269px;top:578px;width:1px;height:16px;background:#777"></div><div class="a" style="left:321px;top:578px;width:1px;height:16px;background:#777"></div><div class="a" style="left:365px;top:578px;width:1px;height:16px;background:#777"></div><div class="a" style="left:409px;top:578px;width:1px;height:16px;background:#777"></div><div class="a" style="left:465px;top:578px;width:1px;height:16px;background:#777"></div><div class="a" style="left:545px;top:578px;width:1px;height:16px;background:#777"></div><div class="t" style="left:305px;top:583px;font-size:10px;line-height:11px;color:#e02020;font-weight:bold">6</div><div class="a" style="left:466px;top:574px;width:35px;height:22px;background:#fff;border:1px solid #000;border-top:none"></div><div class="t" style="left:475px;top:578px;font-size:12px;line-height:14px;color:#000">EA</div><div class="a" style="left:8px;top:601px;width:932px;height:1px;background:#a0a0a0"></div><div class="a" style="left:8px;top:602px;width:932px;height:1px;background:#fff"></div><div class="a" style="left:252px;top:606px;width:1px;height:19px;background:#a8a8a8"></div><div class="a" style="left:387px;top:606px;width:1px;height:19px;background:#a8a8a8"></div><div class="a" style="left:504px;top:606px;width:1px;height:19px;background:#a8a8a8"></div><div class="a" style="left:586px;top:606px;width:1px;height:19px;background:#a8a8a8"></div><div class="a" style="left:667px;top:606px;width:1px;height:19px;background:#a8a8a8"></div><div class="a" style="left:745px;top:606px;width:1px;height:19px;background:#a8a8a8"></div><div class="a" style="left:825px;top:606px;width:1px;height:19px;background:#a8a8a8"></div><div class="a" style="left:903px;top:606px;width:1px;height:19px;background:#a8a8a8"></div><div class="t" style="left:258px;top:608px;font-size:12.5px;line-height:14px">Default</div><svg class="a" style="left:908px;top:606px" width="14" height="16"><path d="M2 1v14M5 1v14M8 1v14M11 1v14" stroke="#3a8a20" stroke-width="2"/><path d="M2 9v6M5 9v6M8 9v6M11 9v6" stroke="#1a3a8a" stroke-width="2"/></svg><svg class="a" style="left:926px;top:611px" width="14" height="14"><path d="M13 2L2 13M13 6L6 13M13 10L10 13" stroke="#888" stroke-width="1.2"/></svg><div class="a" style="left:8px;top:625px;width:932px;height:1px;background:#999"></div><div class="a" style="left:29px;top:49px;width:243px;height:405px;background:#fff;border:1px solid #979797;box-shadow:3px 3px 3px rgba(0,0,0,.35)"></div><div class="a" style="left:30px;top:50px;width:26px;height:403px;background:#f1f1f1;border-right:1px solid #e2e3e3"></div><div class="t cn" style="left:64px;top:55px;line-height:16px">新图表(N)</div><div class="t cn" style="left:64px;top:79px;line-height:16px">打开离线历史数据(O)</div><div class="t cn" style="left:64px;top:103px;line-height:16px">打开已关闭图表</div><svg class="a" style="left:257px;top:107px" width="5" height="8"><path d="M0.5 0.5L4 4 0.5 7.5z" fill="#000"/></svg><div class="t cn" style="left:64px;top:127px;line-height:16px">图表夹</div><svg class="a" style="left:257px;top:131px" width="5" height="8"><path d="M0.5 0.5L4 4 0.5 7.5z" fill="#000"/></svg><div class="t cn" style="left:64px;top:151px;line-height:16px">关闭(C)</div><div class="t cn" style="right:691px;top:151px;line-height:16px">Ctrl+F4</div><div class="t cn" style="left:64px;top:175px;line-height:16px">保存(S)</div><div class="t cn" style="right:691px;top:175px;line-height:16px">Ctrl+S</div><div class="t cn" style="left:64px;top:199px;line-height:16px">保存为图片(i)...</div><div class="t cn" style="left:64px;top:233px;line-height:16px">打开数据文件夹(D)</div><div class="t cn" style="left:64px;top:267px;line-height:16px">开新模拟帐户(A)</div><div class="t cn" style="left:64px;top:291px;line-height:16px">登录到交易账户(L)</div><div class="t cn" style="left:64px;top:315px;line-height:16px">登录到MQL5.community</div><div class="t cn" style="left:64px;top:349px;line-height:16px">打印设置(r)...</div><div class="t cn" style="left:64px;top:373px;line-height:16px">打印预览(v)</div><div class="t cn" style="left:64px;top:397px;line-height:16px">打印(P)...</div><div class="t cn" style="right:691px;top:397px;line-height:16px">Ctrl+P</div><div class="t cn" style="left:64px;top:431px;line-height:16px">退出(x)</div><div class="a" style="left:63px;top:224px;width:207px;height:1px;background:#e0e0e0"></div><div class="a" style="left:63px;top:258px;width:207px;height:1px;background:#e0e0e0"></div><div class="a" style="left:63px;top:340px;width:207px;height:1px;background:#e0e0e0"></div><div class="a" style="left:63px;top:422px;width:207px;height:1px;background:#e0e0e0"></div><svg class="a" style="left:35px;top:53px" width="20" height="20" viewBox="0 0 20 20"><rect x="1.5" y="3.5" width="12" height="10" rx="1.5" fill="#f4f8fd" stroke="#3a84d0" stroke-width="1.2"/><rect x="2" y="4" width="11" height="2" fill="#9cc4ec"/><path d="M5 6.5v5M4 7.5l1-1 1 1M4 10.5l1 1 1-1" stroke="#6a8ab0" stroke-width=".8" fill="none"/><path d="M7 14h8M11 10v8" stroke="#0a7a0a" stroke-width="4"/><path d="M7 14h8M11 10v8" stroke="#5ae05a" stroke-width="2"/></svg><svg class="a" style="left:35px;top:78px" width="20" height="18" viewBox="0 0 20 18"><path d="M1 5h6l1 2h9v9H1z" fill="#e0b030" stroke="#a07810"/><path d="M3 9h15l-2 7H1z" fill="#f8e070" stroke="#b08a10"/><path d="M10 4q4-4 8 0" stroke="#1a9a1a" stroke-width="1.5" fill="none"/></svg><svg class="a" style="left:35px;top:174px" width="18" height="18" viewBox="0 0 18 18"><rect x="1" y="1" width="15" height="15" rx="1.5" fill="#3a7ad0" stroke="#1a4a9a"/><rect x="4" y="2" width="9" height="5" fill="#e8f0fa"/><rect x="4" y="10" width="9" height="6" fill="#fff"/><rect x="6" y="11" width="2" height="4" fill="#3a7ad0"/></svg><svg class="a" style="left:35px;top:198px" width="20" height="18" viewBox="0 0 20 18"><rect x="1.5" y="1.5" width="10" height="12" fill="#fff" stroke="#3a7ad0"/><path d="M4 4v7h6" stroke="#6a8ab0" fill="none"/><rect x="9" y="8" width="9" height="9" rx="1" fill="#5a8ad8" stroke="#2a5aa8"/><rect x="11" y="9" width="5" height="3" fill="#fff"/></svg><svg class="a" style="left:35px;top:232px" width="20" height="16" viewBox="0 0 20 16"><path d="M1 3h6l1 2h9v10H1z" fill="#e0b030" stroke="#a07810"/><path d="M3 7h15l-2 8H1z" fill="#f8e070" stroke="#b08a10"/></svg><svg class="a" style="left:35px;top:265px" width="20" height="19" viewBox="0 0 20 19"><path d="M1.5 15.5Q1 9 7.5 9Q13 9 13 14.5L12 15.5z" fill="#3cc03c" stroke="#1a8a1a" stroke-width=".9"/><circle cx="7.5" cy="5" r="3.8" fill="#f6c628" stroke="#b08010" stroke-width=".9"/><path d="M5 3.5q2.5-2 5 0" stroke="#fde890" fill="none"/><path d="M9.5 13.5h4v-3l4.5 4.5-4.5 4.5v-3h-4z" fill="#2ab82a" stroke="#0a6a0a" stroke-width=".9"/></svg><svg class="a" style="left:35px;top:289px" width="20" height="19" viewBox="0 0 20 19"><path d="M1.5 15.5Q1 9 7.5 9Q13 9 13 14.5L12 15.5z" fill="#3cc03c" stroke="#1a8a1a" stroke-width=".9"/><circle cx="7.5" cy="5" r="3.8" fill="#f6c628" stroke="#b08010" stroke-width=".9"/><path d="M5 3.5q2.5-2 5 0" stroke="#fde890" fill="none"/><path d="M8 13h5v-3.5l5.5 5-5.5 5V16H8z" fill="#2ab82a" stroke="#0a6a0a" stroke-width=".9"/></svg><svg class="a" style="left:35px;top:313px" width="20" height="20" viewBox="0 0 20 20"><path d="M1.5 2.5h10v9H6l-2.5 2.5V11.5h-2z" fill="#4a78c0" stroke="#2a4a8a" stroke-width=".8"/><text x="3.8" y="10" font-size="8.5" font-weight="bold" fill="#fff" font-family="Liberation Sans">S</text><path d="M8 13h5v-3.5l5.5 5-5.5 5V16H8z" fill="#2ab82a" stroke="#0a6a0a" stroke-width=".9"/></svg><svg class="a" style="left:35px;top:372px" width="20" height="18" viewBox="0 0 20 18"><rect x="1.5" y="1.5" width="10" height="12" fill="#f8e070" stroke="#b08a10"/><path d="M4 4v6h6" stroke="#4a7ab8" fill="none"/><rect x="10" y="8" width="8" height="8" rx="2" fill="#e8e8e8" stroke="#888"/></svg><svg class="a" style="left:35px;top:397px" width="20" height="18" viewBox="0 0 20 18"><rect x="5.5" y="1.5" width="9" height="7" fill="#f8e070" stroke="#b08a10"/><rect x="1.5" y="7.5" width="17" height="7" rx="2" fill="#e0e0e0" stroke="#888"/><rect x="5" y="12" width="10" height="4" fill="#fff" stroke="#999"/></svg><div class="a" style="left:28px;top:29px;width:53px;height:20px;border:3px solid #f42a2a"></div><div class="a" style="left:32px;top:287px;width:147px;height:23px;border:3px solid #f42a2a"></div><svg class="a" style="left:0;top:0" width="948" height="633"><path d="M48.3 50L49.3 50L58 273L61.7 273L54.2 287L46.4 273L51 273z" fill="#f42a2a"/></svg></body></html>
